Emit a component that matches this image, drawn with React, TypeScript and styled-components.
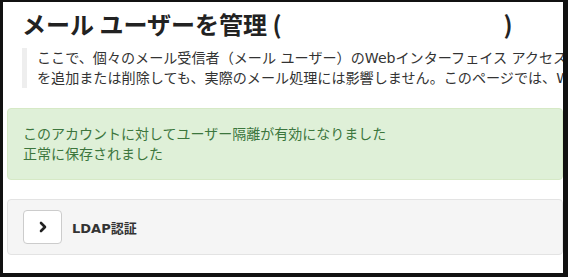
import React from "react";
import styled, { createGlobalStyle } from "styled-components";

const Global = createGlobalStyle`
  html, body { margin: 0; padding: 0; background: #ffffff; }
  body { font-family: "DejaVu Sans", "Noto Sans CJK JP", sans-serif; }
`;

const Frame = styled.div`
  box-sizing: border-box;
  width: 568px;
  height: 277px;
  border-style: solid;
  border-color: #111;
  border-width: 2px 5px 4px 3px;
  overflow: hidden;
  background: #fff;
  color: #333;
  font-family: "DejaVu Sans", "Noto Sans CJK JP", sans-serif;
`;

const Header = styled.div`
  padding: 7px 0 0 19px;
`;

const Title = styled.h1`
  margin: 0;
  font-family: "Noto Sans CJK JP", sans-serif;
  font-size: 24px;
  font-weight: 700;
  line-height: 30px;
  color: #222;
  white-space: nowrap;
  display: flex;
  align-items: center;
`;

const Redacted = styled.span`
  display: inline-block;
  width: 222px;
`;

const Quote = styled.blockquote`
  margin: 9px 0 0 0;
  padding: 0 0 0 10px;
  border-left: 5px solid #eeeeee;
  font-size: 14.1px;
  line-height: 20px;
  color: #333;
  white-space: nowrap;
`;

const Alert = styled.div`
  margin: 20px 0 0 4px;
  padding: 15px;
  border: 1px solid #d6e9c6;
  border-radius: 4px;
  background: #dff0d8;
  color: #3c763d;
  font-size: 14px;
  line-height: 20px;
  white-space: nowrap;
`;

const Panel = styled.div`
  margin: 19px 0 0 4px;
  padding: 10px 15px;
  border: 1px solid #e3e3e3;
  border-radius: 4px;
  background: #f5f5f5;
  display: flex;
  align-items: center;
  gap: 10px;
`;

const ToggleButton = styled.button`
  box-sizing: border-box;
  width: 39px;
  height: 34px;
  padding: 0;
  border: 1px solid #cccccc;
  border-radius: 4px;
  background: #ffffff;
  display: flex;
  align-items: center;
  justify-content: center;
  cursor: pointer;
`;

const PanelTitle = styled.span`
  font-size: 13px;
  font-weight: 700;
  color: #333;
`;

export default function App() {
  return (
    <>
      <Global />
      <Frame>
        <Header>
          <Title>
            メール ユーザーを管理 (<Redacted />)
          </Title>
          <Quote>
            ここで、個々のメール受信者（メール ユーザー）のWebインターフェイス アクセスを管理できます。
            <br />
            を追加または削除しても、実際のメール処理には影響しません。このページでは、Webインターフェイス
          </Quote>
        </Header>
        <Alert>
          このアカウントに対してユーザー隔離が有効になりました
          <br />
          正常に保存されました
        </Alert>
        <Panel>
          <ToggleButton aria-label="展開">
            <svg width="10" height="12" viewBox="0 0 10 12">
              <polyline
                points="3,2 7,6 3,10"
                fill="none"
                stroke="#222"
                strokeWidth="2.6"
                strokeLinecap="round"
                strokeLinejoin="round"
              />
            </svg>
          </ToggleButton>
          <PanelTitle>LDAP認証</PanelTitle>
        </Panel>
      </Frame>
    </>
  );
}
